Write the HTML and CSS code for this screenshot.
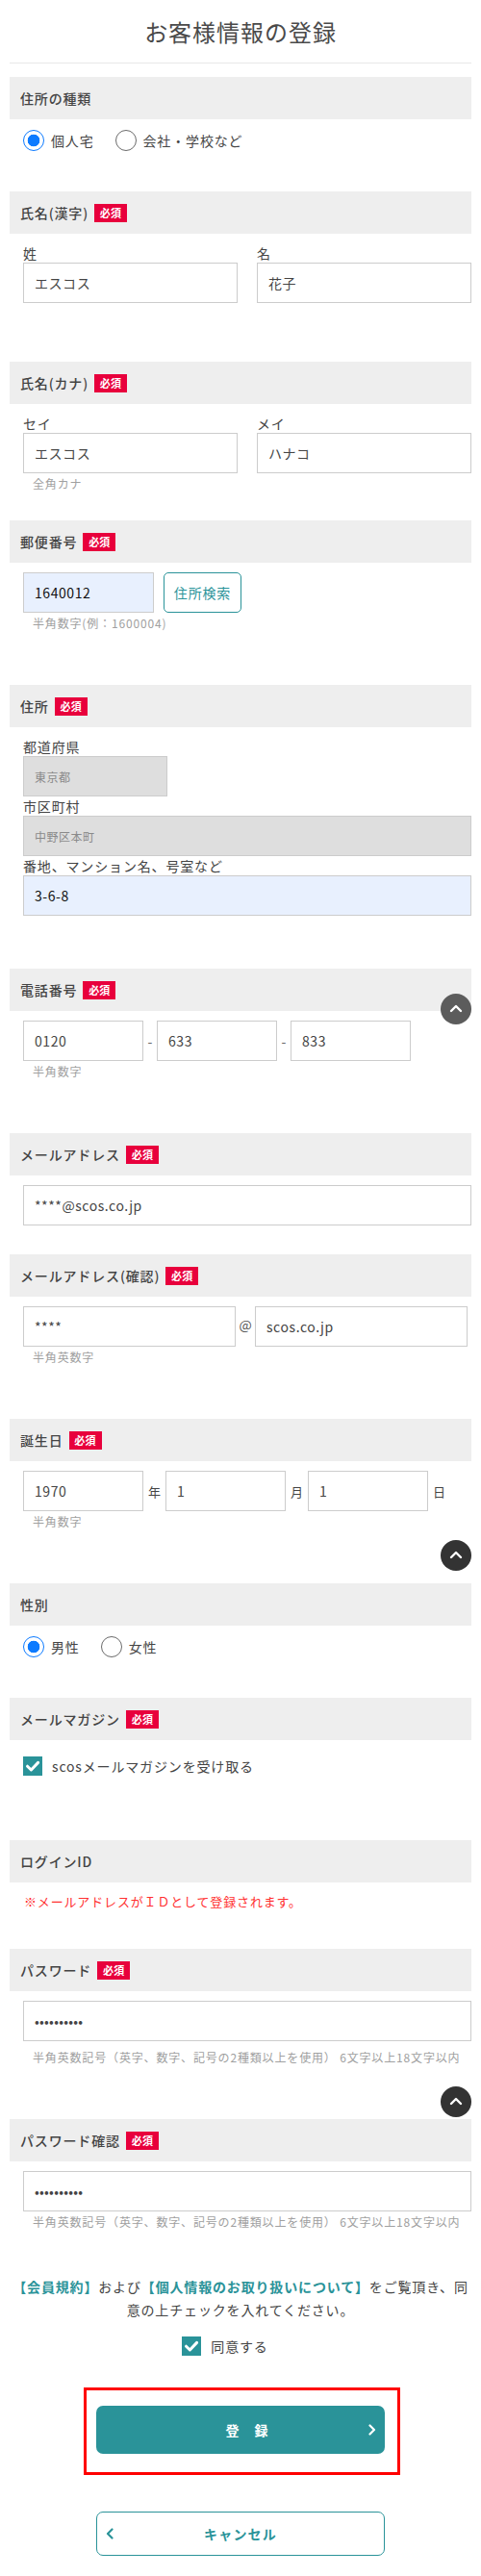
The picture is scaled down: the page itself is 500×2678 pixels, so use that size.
FILE: index.html
```html
<!DOCTYPE html>
<html lang="ja">
<head>
<meta charset="utf-8">
<title>お客様情報の登録</title>
<link rel="stylesheet" href="styles.css">
</head>
<body>
<div class="page">
  <h1 class="page-title">お客様情報の登録</h1>

  <section class="sec sec--radio">
    <div class="sec-head"><span class="sec-title">住所の種類</span></div>
    <div class="sec-body">
      <div class="radio-row">
        <label class="radio"><input type="radio" name="atype" checked><span>個人宅</span></label>
        <label class="radio"><input type="radio" name="atype"><span>会社・学校など</span></label>
      </div>
    </div>
  </section>

  <section class="sec sec--name">
    <div class="sec-head"><span class="sec-title">氏名(漢字)</span><span class="req">必須</span></div>
    <div class="sec-body">
      <div class="pair">
        <div class="field"><div class="field-label">姓</div><input class="inp" value="エスコス"></div>
        <div class="field"><div class="field-label">名</div><input class="inp" value="花子"></div>
      </div>
    </div>
  </section>

  <section class="sec sec--kana">
    <div class="sec-head"><span class="sec-title">氏名(カナ)</span><span class="req">必須</span></div>
    <div class="sec-body">
      <div class="pair">
        <div class="field"><div class="field-label">セイ</div><input class="inp" value="エスコス"></div>
        <div class="field"><div class="field-label">メイ</div><input class="inp" value="ハナコ"></div>
      </div>
      <div class="hint">全角カナ</div>
    </div>
  </section>

  <section class="sec">
    <div class="sec-head"><span class="sec-title">郵便番号</span><span class="req">必須</span></div>
    <div class="sec-body">
      <div class="zip-row">
        <input class="inp inp--zip autofill" value="1640012">
        <button class="zip-btn" type="button">住所検索</button>
      </div>
      <div class="hint">半角数字(例：1600004)</div>
    </div>
  </section>

  <section class="sec">
    <div class="sec-head"><span class="sec-title">住所</span><span class="req">必須</span></div>
    <div class="sec-body">
      <div class="field-label">都道府県</div>
      <input class="inp inp--pref locked" value="東京都" readonly>
      <div class="field-label">市区町村</div>
      <input class="inp locked" value="中野区本町" readonly>
      <div class="field-label">番地、マンション名、号室など</div>
      <input class="inp autofill" value="3-6-8">
    </div>
  </section>

  <section class="sec">
    <div class="sec-head"><span class="sec-title">電話番号</span><span class="req">必須</span></div>
    <div class="sec-body">
      <div class="tel-row">
        <input class="inp inp--part" value="0120">
        <span class="dash">-</span>
        <input class="inp inp--part" value="633">
        <span class="dash">-</span>
        <input class="inp inp--part" value="833">
      </div>
      <div class="hint">半角数字</div>
    </div>
  </section>

  <section class="sec sec--mail">
    <div class="sec-head"><span class="sec-title">メールアドレス</span><span class="req">必須</span></div>
    <div class="sec-body">
      <input class="inp" value="****@scos.co.jp">
    </div>
  </section>

  <section class="sec">
    <div class="sec-head"><span class="sec-title">メールアドレス(確認)</span><span class="req">必須</span></div>
    <div class="sec-body">
      <div class="mail-row">
        <input class="inp inp--mail" value="****">
        <span class="at">@</span>
        <input class="inp inp--mail" value="scos.co.jp">
      </div>
      <div class="hint">半角英数字</div>
    </div>
  </section>

  <section class="sec">
    <div class="sec-head"><span class="sec-title">誕生日</span><span class="req">必須</span></div>
    <div class="sec-body">
      <div class="birth-row">
        <input class="inp inp--part" value="1970">
        <span class="unit">年</span>
        <input class="inp inp--part" value="1">
        <span class="unit">月</span>
        <input class="inp inp--part" value="1">
        <span class="unit">日</span>
      </div>
      <div class="hint">半角数字</div>
    </div>
  </section>

  <section class="sec sec--radio">
    <div class="sec-head"><span class="sec-title">性別</span></div>
    <div class="sec-body">
      <div class="radio-row">
        <label class="radio"><input type="radio" name="sex" checked><span>男性</span></label>
        <label class="radio"><input type="radio" name="sex"><span>女性</span></label>
      </div>
    </div>
  </section>

  <section class="sec sec--mag">
    <div class="sec-head"><span class="sec-title">メールマガジン</span><span class="req">必須</span></div>
    <div class="sec-body">
      <label class="check-row">
        <span class="check"><svg viewBox="0 0 20 20" width="20" height="20"><path d="M4.5 10.2 L8.4 14 L15.6 6.4" fill="none" stroke="#fff" stroke-width="3" stroke-linecap="round" stroke-linejoin="round"/></svg></span>
        <span>scosメールマガジンを受け取る</span>
      </label>
    </div>
  </section>

  <section class="sec sec--notice">
    <div class="sec-head"><span class="sec-title">ログインID</span></div>
    <div class="sec-body">
      <p class="notice">※メールアドレスがＩＤとして登録されます。</p>
    </div>
  </section>

  <section class="sec">
    <div class="sec-head"><span class="sec-title">パスワード</span><span class="req">必須</span></div>
    <div class="sec-body">
      <input class="inp inp--pw" type="password" value="aaaaaaaaaa">
      <div class="hint hint--low">半角英数記号（英字、数字、記号の2種類以上を使用） 6文字以上18文字以内</div>
    </div>
  </section>

  <section class="sec sec--last">
    <div class="sec-head"><span class="sec-title">パスワード確認</span><span class="req">必須</span></div>
    <div class="sec-body">
      <input class="inp inp--pw" type="password" value="aaaaaaaaaa">
      <div class="hint">半角英数記号（英字、数字、記号の2種類以上を使用） 6文字以上18文字以内</div>
    </div>
  </section>

  <p class="agree-text"><a class="agree-link" href="#">【会員規約】</a>および<a class="agree-link" href="#">【個人情報のお取り扱いについて】</a>をご覧頂き、同意の上チェックを入れてください。</p>

  <label class="check-row check-row--agree">
    <span class="check"><svg viewBox="0 0 20 20" width="20" height="20"><path d="M4.5 10.2 L8.4 14 L15.6 6.4" fill="none" stroke="#fff" stroke-width="3" stroke-linecap="round" stroke-linejoin="round"/></svg></span>
    <span>同意する</span>
  </label>

  <div class="highlight">
    <button class="btn-primary" type="button">
      <span class="btn-text">登　録</span>
      <svg class="btn-chev" viewBox="0 0 8 12" width="8" height="12"><path d="M1.5 1.5 L6 6 L1.5 10.5" fill="none" stroke="#fff" stroke-width="2.2" stroke-linecap="round" stroke-linejoin="round"/></svg>
    </button>
  </div>

  <button class="btn-cancel" type="button">
    <svg class="btn-chev-l" viewBox="0 0 8 12" width="8" height="12"><path d="M6.5 1.5 L2 6 L6.5 10.5" fill="none" stroke="#2a9399" stroke-width="2.2" stroke-linecap="round" stroke-linejoin="round"/></svg>
    <span class="btn-text-c">キャンセル</span>
  </button>

  <a class="to-top to-top--1" href="#"><svg viewBox="0 0 14 9" width="14" height="9"><path d="M2 7 L7 2 L12 7" fill="none" stroke="#fff" stroke-width="2.4" stroke-linecap="round" stroke-linejoin="round"/></svg></a>
  <a class="to-top to-top--2" href="#"><svg viewBox="0 0 14 9" width="14" height="9"><path d="M2 7 L7 2 L12 7" fill="none" stroke="#fff" stroke-width="2.4" stroke-linecap="round" stroke-linejoin="round"/></svg></a>
  <a class="to-top to-top--3" href="#"><svg viewBox="0 0 14 9" width="14" height="9"><path d="M2 7 L7 2 L12 7" fill="none" stroke="#fff" stroke-width="2.4" stroke-linecap="round" stroke-linejoin="round"/></svg></a>
</div>
</body>
</html>
```

FILE: styles.css
```css
* { box-sizing: border-box; }

html, body {
  margin: 0;
  padding: 0;
  background: #fff;
}

body {
  font-family: "Noto Sans CJK JP", "Noto Sans", sans-serif;
  color: #444;
  font-size: 14px;
  letter-spacing: 0.06em;
}

.page {
  position: relative;
  width: 500px;
  padding: 0 10px 22px;
}

.page-title {
  margin: 0 0 14px;
  height: 66px;
  line-height: 66px;
  border-bottom: 1px solid #e8e8e8;
  text-align: center;
  font-size: 24px;
  font-weight: 400;
  color: #4a4a4a;
  letter-spacing: 0.04em;
}

/* sections */
.sec { margin-bottom: 55px; }
.sec--radio { margin-bottom: 42px; }
.sec--name { margin-bottom: 61px; }
.sec--kana { margin-bottom: 29px; }
.sec--mail { margin-bottom: 30px; }
.sec--mag { margin-bottom: 67px; }
.sec--notice { margin-bottom: 39px; }
.sec--last { margin-bottom: 46px; }

.sec-head {
  height: 44px;
  display: flex;
  align-items: center;
  padding-left: 11px;
  background: #eeeeee;
}

.sec-title {
  font-size: 14px;
  font-weight: 500;
  color: #444;
}

.req {
  margin-left: 6px;
  width: 34px;
  height: 19px;
  display: inline-flex;
  align-items: center;
  justify-content: center;
  background: #e8003c;
  color: #fff;
  font-size: 11px;
  font-weight: 700;
  letter-spacing: 0.02em;
}

.sec-body {
  padding: 10px 0 0 14px;
}

/* fields */
.field-label {
  height: 20px;
  line-height: 20px;
  font-size: 14px;
  color: #444;
}

.inp {
  display: block;
  width: 100%;
  height: 42px;
  margin: 0;
  padding: 0 11px;
  border: 1px solid #cccccc;
  border-radius: 0;
  background: #fff;
  font-family: "Noto Sans CJK JP", "Noto Sans", sans-serif;
  font-size: 14px;
  letter-spacing: 0.04em;
  color: #444;
  outline: none;
}

.autofill {
  background: #e8f0fe;
  color: #111;
}

.locked {
  background: #dedede;
  color: #8a8a8a;
  font-size: 12px;
}

.inp--pref { width: 150px; }
.inp--zip { width: 136px; }
.inp--part { width: 125px; flex: none; }
.inp--mail { width: 221px; flex: none; }
.inp--pw { letter-spacing: 0.02em; color: #444; }

.pair {
  display: grid;
  grid-template-columns: 1fr 1fr;
  column-gap: 20px;
}

.hint {
  margin-top: 2px;
  padding-left: 10px;
  height: 18px;
  line-height: 18px;
  font-size: 12px;
  color: #a0a0a0;
  white-space: nowrap;
}

.hint--low { margin-top: 8px; }

.zip-row {
  display: flex;
  align-items: center;
}

.zip-btn {
  margin-left: 10px;
  width: 81px;
  height: 42px;
  padding: 0;
  border: 1.5px solid #2a9399;
  border-radius: 5px;
  background: #fff;
  color: #2a9399;
  font-family: "Noto Sans CJK JP", "Noto Sans", sans-serif;
  font-size: 14px;
  letter-spacing: 0.06em;
}

.tel-row,
.birth-row,
.mail-row {
  display: flex;
  align-items: center;
}

.dash {
  width: 14px;
  text-align: center;
  color: #666;
  font-size: 14px;
  letter-spacing: 0;
}

.at {
  width: 20px;
  text-align: center;
  color: #555;
  font-size: 14px;
  letter-spacing: 0;
  align-self: flex-start;
  margin-top: 9px;
}

.unit {
  width: 13px;
  margin: 0 5px;
  font-size: 13px;
  color: #444;
  letter-spacing: 0;
}

/* radios */
.radio-row {
  margin-top: 1px;
  height: 22px;
  display: flex;
  align-items: center;
  gap: 22px;
}

.radio {
  display: flex;
  align-items: center;
  gap: 7px;
  font-size: 14px;
  color: #444;
}

.radio input {
  -webkit-appearance: none;
  appearance: none;
  width: 22px;
  height: 22px;
  margin: 0;
  border: 1.2px solid #6b6b6b;
  border-radius: 50%;
  background: #fff;
}

.radio input:checked {
  border: 1.6px solid #0d7bff;
  background: radial-gradient(circle, #0d7bff 0 6px, #fff 6.6px);
}

/* checkbox */
.check-row {
  margin-top: 7px;
  height: 20px;
  display: flex;
  align-items: center;
  gap: 10px;
  font-size: 14px;
  color: #444;
}

.check {
  width: 20px;
  height: 20px;
  flex: none;
  background: #2a9399;
  display: block;
}

.check svg { display: block; }

.notice {
  margin: 0;
  height: 20px;
  line-height: 20px;
  padding-left: 1px;
  font-size: 13px;
  color: #ff3030;
}

/* agreement */
.agree-text {
  margin: 0;
  line-height: 24px;
  font-size: 14px;
  text-align: center;
  color: #444;
}

.agree-link {
  color: #2a9399;
  font-weight: 700;
  text-decoration: none;
}

.check-row--agree {
  margin-top: 16px;
  justify-content: center;
  padding-right: 32px;
}

/* buttons */
.highlight {
  margin: 33px 0 0 77px;
  width: 329px;
  padding: 16px 13px 19px 10px;
  border: 3px solid #ff0000;
}

.btn-primary {
  width: 300px;
  height: 50px;
  padding: 0;
  border: 0;
  border-radius: 7px;
  background: #2a9399;
  display: grid;
  grid-template-columns: 1fr auto 1fr;
  align-items: center;
  font-family: "Noto Sans CJK JP", "Noto Sans", sans-serif;
}

.btn-text {
  grid-column: 2;
  padding-left: 14px;
  color: #fff;
  font-size: 14px;
  font-weight: 700;
  letter-spacing: 1px;
}

.btn-chev {
  grid-column: 3;
  justify-self: end;
  margin-right: 9px;
  display: block;
}

.btn-cancel {
  margin: 38px 0 0 90px;
  width: 300px;
  height: 46px;
  padding: 0;
  border: 1.2px solid #2a9399;
  border-radius: 7px;
  background: #fff;
  display: grid;
  grid-template-columns: 1fr auto 1fr;
  align-items: center;
  font-family: "Noto Sans CJK JP", "Noto Sans", sans-serif;
}

.btn-chev-l {
  grid-column: 1;
  justify-self: start;
  margin-left: 9px;
  display: block;
}

.btn-text-c {
  grid-column: 2;
  color: #2a9399;
  font-size: 14px;
  font-weight: 700;
  letter-spacing: 1.2px;
}

/* floating back-to-top buttons */
.to-top {
  position: absolute;
  left: 458px;
  width: 32px;
  height: 32px;
  border-radius: 50%;
  background: #333;
  display: flex;
  align-items: center;
  justify-content: center;
}

.to-top svg { display: block; margin-top: -2px; }

.to-top--1 { top: 1033px; background: #5c5c5c; }
.to-top--2 { top: 1601px; }
.to-top--3 { top: 2169px; }
```
